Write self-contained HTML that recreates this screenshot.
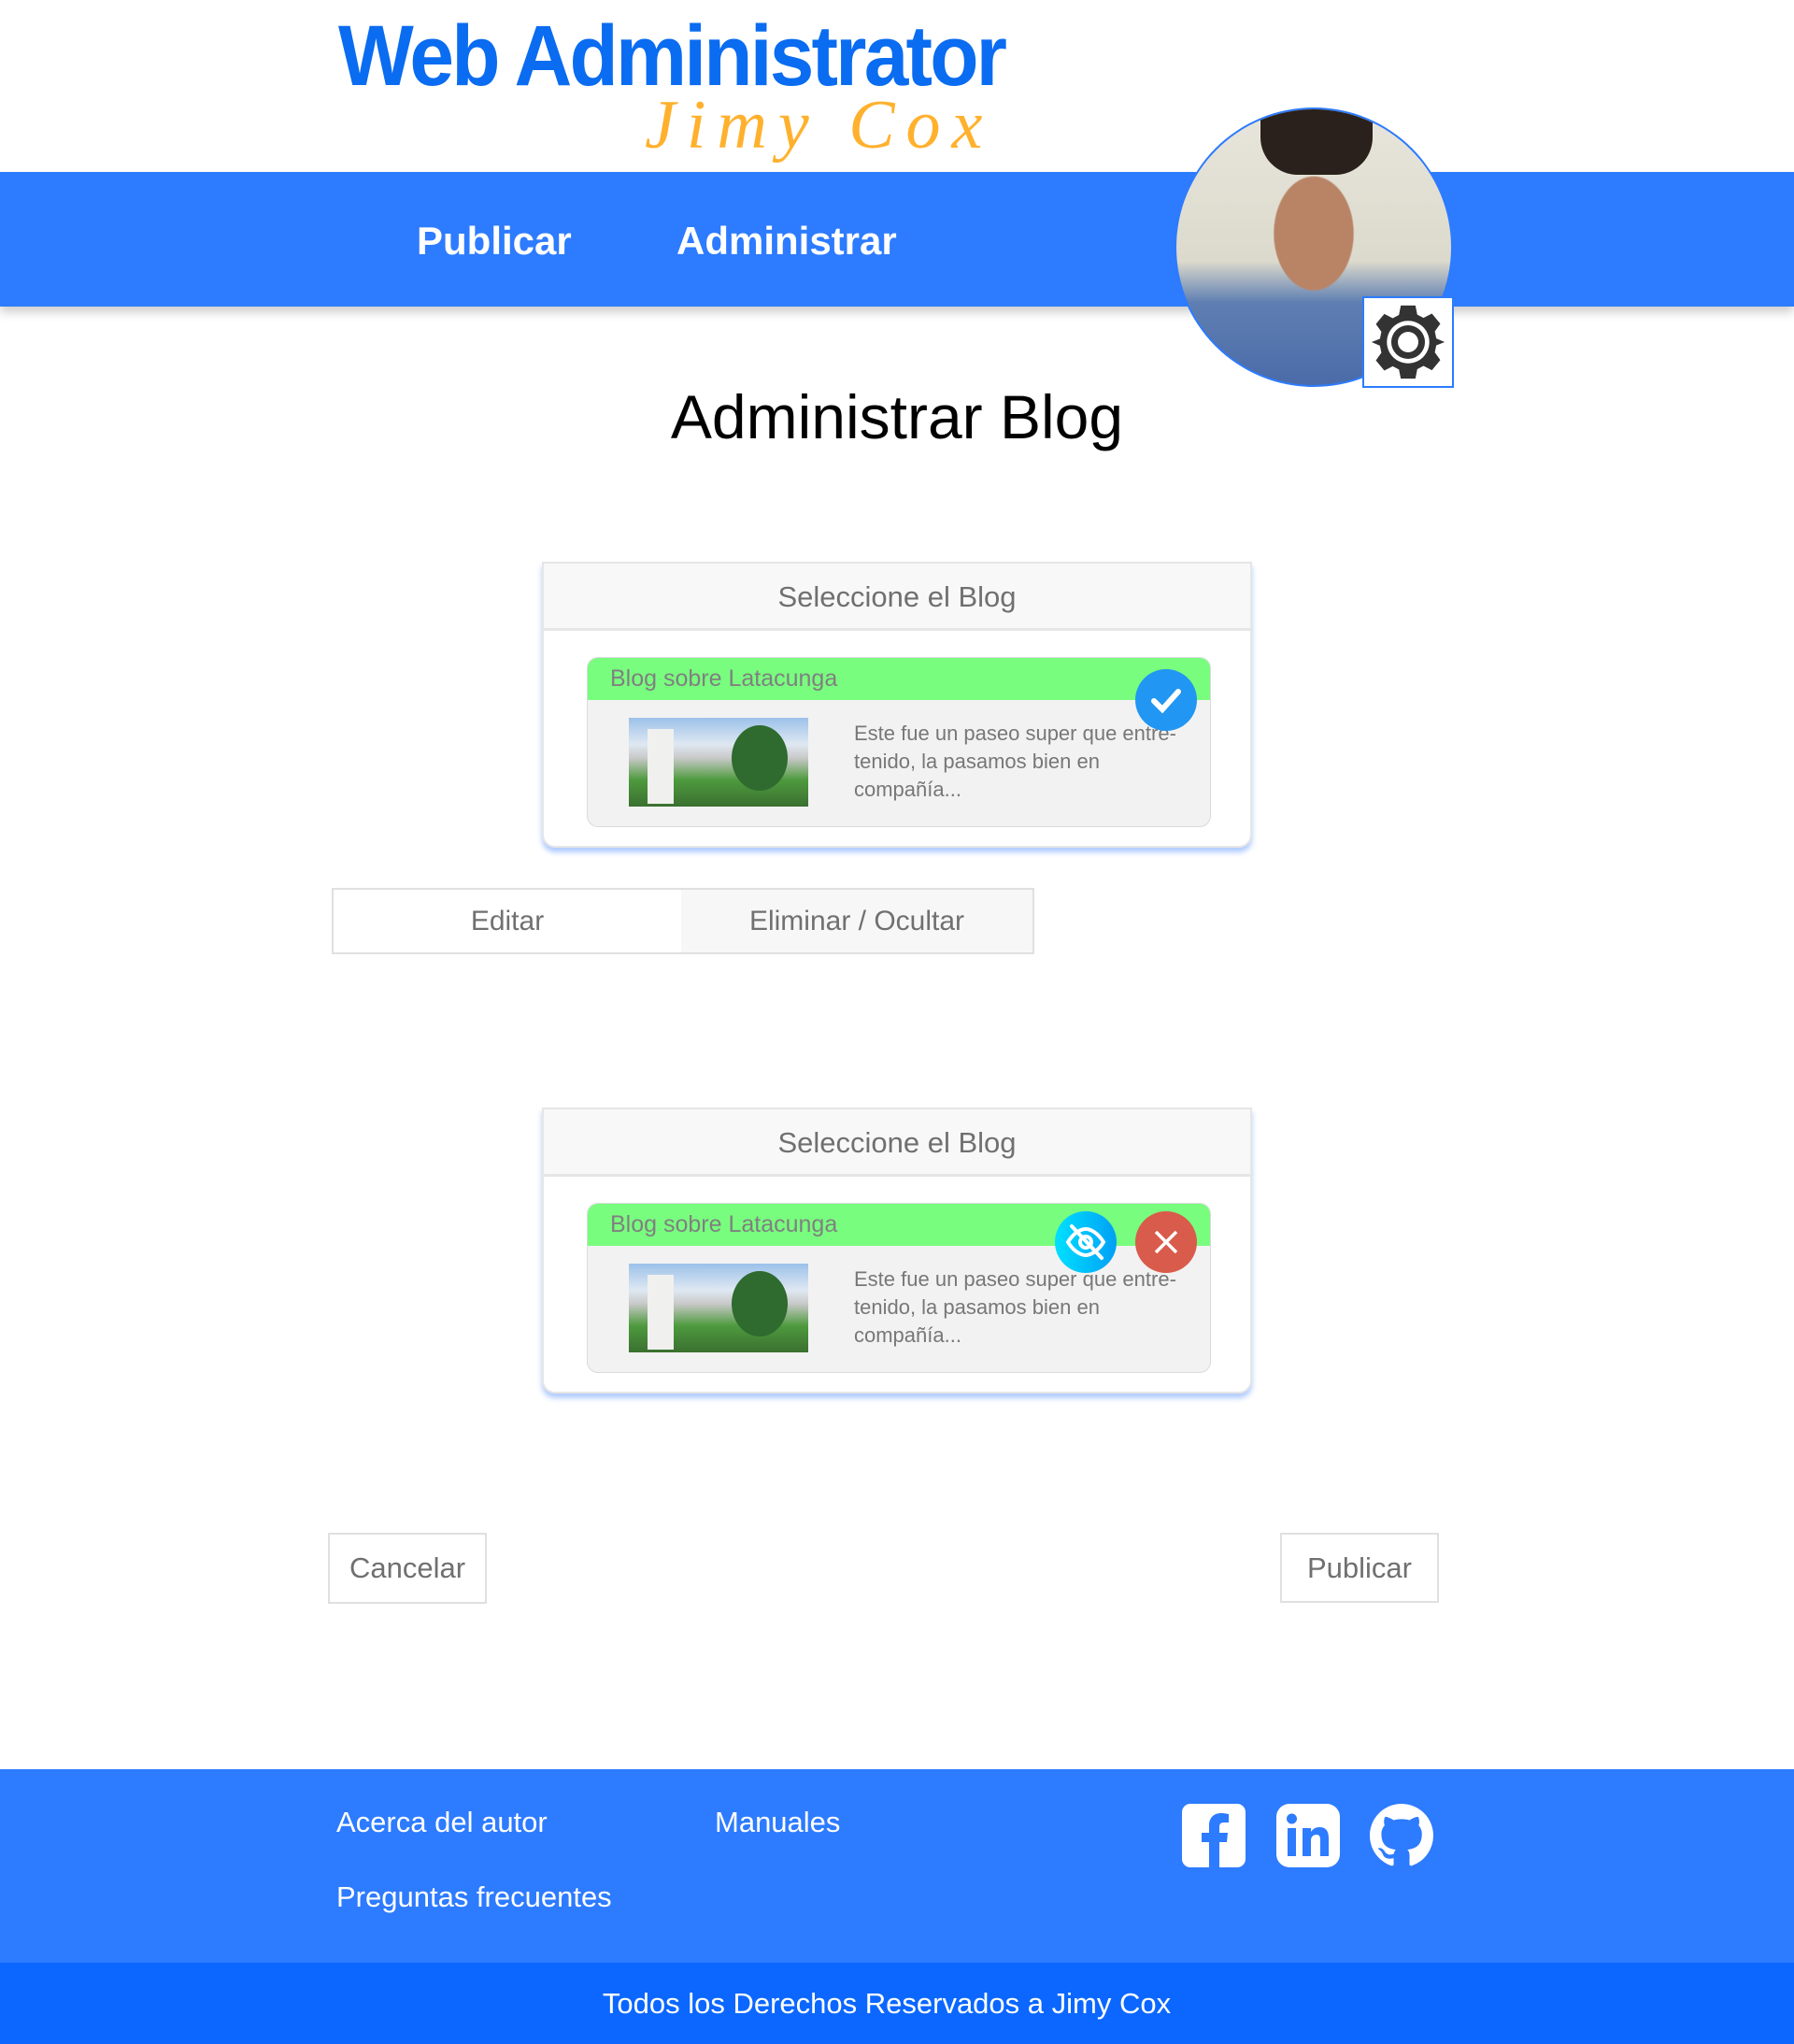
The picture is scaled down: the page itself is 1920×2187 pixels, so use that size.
<!DOCTYPE html>
<html><head><meta charset="utf-8"><style>
*{margin:0;padding:0;box-sizing:border-box}
body{width:1920px;height:2187px;position:relative;background:#fff;font-family:"Liberation Sans",sans-serif;overflow:hidden}
.a{position:absolute}
.nav{left:0;top:184px;width:1920px;height:144px;background:#2d7bff;box-shadow:0 6px 10px rgba(0,0,0,.2)}
.nav span{position:absolute;top:50px;color:#fff;font-weight:bold;font-size:42px}
.card{width:760px;height:306px;background:#fff;border:2px solid #e6e6e6;border-radius:0 0 14px 14px;box-shadow:0 5px 6px rgba(80,140,255,.45);left:580px}
.ch{height:72px;background:#f8f8f8;border-bottom:3px solid #e6e6e6;text-align:center;font-size:31px;color:#707070;line-height:72px}
.in{position:absolute;left:46px;top:100px;width:668px;height:182px;background:#f2f2f2;border:1px solid #dadada;border-radius:12px;overflow:hidden}
.gh{height:45px;background:#78fd7e;color:#808080;font-size:25px;line-height:45px;padding-left:24px}
.img{position:absolute;left:44px;top:64px;width:192px;height:95px;background:linear-gradient(180deg,#9cc1ea 0%,#dfe8f2 30%,#c9c9c9 45%,#4e9a3e 70%,#3a7030 100%)}
.img:before{content:"";position:absolute;left:20px;top:12px;width:28px;height:80px;background:#f0f0ee}
.img:after{content:"";position:absolute;left:110px;top:8px;width:60px;height:70px;border-radius:50%;background:#2f6a2e}
.ds{position:absolute;left:285px;top:66px;width:370px;font-size:22px;line-height:30px;color:#777}
.btn{border:2px solid #e0e0e0;font-size:31px;color:#707070;text-align:center;line-height:72px;background:#fff}
.fl{color:#fff;font-size:31px}
</style></head><body>
<div class="a" style="left:362px;top:8px;font-size:92px;font-weight:bold;color:#0a6cf0;letter-spacing:-3px;transform:scaleX(0.93);transform-origin:left">Web Administrator</div>
<div class="a" style="left:690px;top:92px;font-size:74px;font-style:italic;color:#ffb12e;font-family:'Liberation Serif',serif;letter-spacing:12px">Jimy Cox</div>
<div class="a nav"><span style="left:446px">Publicar</span><span style="left:724px">Administrar</span></div>
<div class="a" style="left:1257px;top:115px;width:298px;height:299px;border-radius:50%;border:2px solid #2d7bff;background:radial-gradient(ellipse 70px 100px at 50% 45%,#b98466 60%,transparent 62%),linear-gradient(180deg,#e8e6dc 0%,#dcdacc 55%,#5f7fb2 70%,#4a6ba8 100%);overflow:hidden">
<div class="a" style="left:90px;top:0;width:120px;height:70px;background:#2a211c;border-radius:0 0 40px 40px"></div></div>
<div class="a" style="left:1458px;top:317px;width:98px;height:98px;background:#fff;border:2px solid #2d7bff">
<svg width="94" height="94" viewBox="0 0 24 24" style="position:absolute;left:0;top:0"><path fill="#333" d="M10 2h4l.5 2.5 1.7.9 2.3-1.2 2.3 2.8-1.5 2.1.4 1.9L22 12v0l-2.3.9-.4 1.9 1.5 2.1-2.3 2.8-2.3-1.2-1.7.9L14 22h-4l-.5-2.5-1.7-.9-2.3 1.2-2.3-2.8 1.5-2.1-.4-1.9L2 12l2.3-.9.4-1.9-1.5-2.1 2.3-2.8 2.3 1.2 1.7-.9z"/><circle cx="12" cy="12" r="5.8" fill="#fff"/><circle cx="12" cy="12" r="4.6" fill="#333"/><circle cx="12" cy="12" r="2.8" fill="#fff"/></svg></div>
<div class="a" style="left:0;width:1920px;top:408px;text-align:center;font-size:66px;color:#000">Administrar Blog</div>

<div class="a card" style="top:601px"><div class="ch">Seleccione el Blog</div>
<div class="in"><div class="gh">Blog sobre Latacunga</div><div class="img"></div><div class="ds">Este fue un paseo super que entre-tenido, la pasamos bien en compañía...</div></div>
<div class="a" style="left:633px;top:113px;width:66px;height:66px;border-radius:50%;background:#2196f3"><svg width="66" height="66" viewBox="0 0 66 66"><path d="M20 34l9 9 17-19" stroke="#fff" stroke-width="6" fill="none" stroke-linecap="round"/></svg></div>
</div>

<div class="a" style="left:355px;top:950px;width:752px;height:71px;border:2px solid #e0e0e0;display:flex;font-size:30px;color:#707070">
<div style="width:372px;text-align:center;line-height:67px;background:#fff">Editar</div><div style="flex:1;text-align:center;line-height:67px;background:#f7f7f7">Eliminar / Ocultar</div></div>

<div class="a card" style="top:1185px"><div class="ch">Seleccione el Blog</div>
<div class="in"><div class="gh">Blog sobre Latacunga</div><div class="img"></div><div class="ds">Este fue un paseo super que entre-tenido, la pasamos bien en compañía...</div></div>
<div class="a" style="left:547px;top:109px;width:66px;height:66px;border-radius:50%;background:linear-gradient(90deg,#00e0ff,#00a0f5)"><svg width="66" height="66" viewBox="0 0 66 66" fill="none" stroke="#fff" stroke-width="4" stroke-linecap="round"><path d="M14 33c6-10 14-14 19-14s13 4 19 14c-6 10-14 14-19 14s-13-4-19-14z"/><circle cx="33" cy="33" r="6"/><path d="M18 16l32 34"/></svg></div>
<div class="a" style="left:633px;top:109px;width:66px;height:66px;border-radius:50%;background:#d95b4b"><svg width="66" height="66" viewBox="0 0 66 66"><path d="M22 22l22 22M44 22L22 44" stroke="#fff" stroke-width="3.5"/></svg></div>
</div>

<div class="a btn" style="left:351px;top:1640px;width:170px;height:76px">Cancelar</div>
<div class="a btn" style="left:1370px;top:1640px;width:170px;height:75px">Publicar</div>

<div class="a" style="left:0;top:1893px;width:1920px;height:207px;background:#2d7bff"></div>
<div class="a fl" style="left:360px;top:1932px">Acerca del autor</div>
<div class="a fl" style="left:765px;top:1932px">Manuales</div>
<div class="a fl" style="left:360px;top:2012px">Preguntas frecuentes</div>
<svg class="a" style="left:1265px;top:1930px" width="68" height="68" viewBox="0 0 68 68"><rect width="68" height="68" rx="9" fill="#fff"/><path d="M40 68V41h8l1-10h-9v-6c0-3 1-5 5-5h5v-9c-1 0-4-1-8-1-8 0-13 5-13 13v8h-8v10h8v27z" fill="#2d7bff"/></svg>
<svg class="a" style="left:1366px;top:1930px" width="68" height="68" viewBox="0 0 68 68"><rect width="68" height="68" rx="14" fill="#fff"/><rect x="12" y="26" width="9" height="30" fill="#2d7bff"/><circle cx="16.5" cy="16" r="5.5" fill="#2d7bff"/><path d="M28 26h9v4c2-3 5-5 9-5 7 0 10 4 10 12v19h-9V39c0-4-1-6-4-6s-6 2-6 6v17h-9z" fill="#2d7bff"/></svg>
<svg class="a" style="left:1466px;top:1930px" width="68" height="68" viewBox="0 0 16 16"><path fill="#fff" d="M8 0C3.58 0 0 3.58 0 8c0 3.540 2.29 6.53 5.47 7.59.4.07.55-.17.55-.38 0-.19-.01-.82-.01-1.49-2.010.37-2.53-.49-2.690-.94-.09-.23-.48-.94-.82-1.130-.28-.15-.68-.52-.01-.53.63-.01 1.08.58 1.23.82.72 1.21 1.87.87 2.33.66.07-.52.28-.87.51-1.07-1.78-.2-3.64-.89-3.64-3.95 0-.87.31-1.59.82-2.15-.08-.2-.36-1.02.08-2.12 0 0 .67-.21 2.2.82.64-.18 1.32-.27 2-.27s1.36.09 2 .27c1.53-1.04 2.2-.82 2.2-.82.44 1.1.16 1.92.08 2.12.51.56.82 1.27.82 2.15 0 3.07-1.87 3.75-3.65 3.95.29.25.54.73.54 1.48 0 1.07-.01 1.93-.01 2.2 0 .21.15.46.55.38A8.01 8.01 0 0016 8c0-4.42-3.58-8-8-8z"/></svg>
<div class="a" style="left:0;top:2100px;width:1920px;height:87px;background:#0b67ff;color:#fff;font-size:31px;text-align:center;line-height:87px;padding-right:22px">Todos los Derechos Reservados a Jimy Cox</div>
</body></html>
